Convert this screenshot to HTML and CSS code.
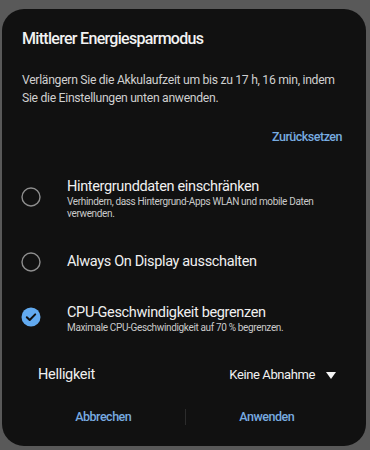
FILE: index.html
```html
<!DOCTYPE html>
<html lang="de">
<head>
<meta charset="utf-8">
<link rel="stylesheet" href="styles.css">
</head>
<body>
<div class="dialog">
  <h1 class="title">Mittlerer Energiesparmodus</h1>
  <p class="desc">Verlängern Sie die Akkulaufzeit um bis zu 17 h, 16 min, indem Sie die Einstellungen unten anwenden.</p>
  <div class="reset-row"><span class="link">Zurücksetzen</span></div>
  <div class="list">
    <div class="row has-sub">
      <svg class="icon" width="20" height="20" viewBox="0 0 20 20"><circle cx="10" cy="10" r="9" fill="none" stroke="#8e8e8e" stroke-width="1.4"/></svg>
      <div class="text">
        <div class="label">Hintergrunddaten einschränken</div>
        <div class="sub">Verhindern, dass Hintergrund-Apps WLAN und mobile Daten verwenden.</div>
      </div>
    </div>
    <div class="row">
      <svg class="icon" width="20" height="20" viewBox="0 0 20 20"><circle cx="10" cy="10" r="9" fill="none" stroke="#8e8e8e" stroke-width="1.4"/></svg>
      <div class="text">
        <div class="label">Always On Display ausschalten</div>
      </div>
    </div>
    <div class="row has-sub">
      <svg class="icon" width="20" height="20" viewBox="0 0 20 20"><circle cx="10" cy="10" r="9.5" fill="#62aaf0"/><path d="M5.8 10.2 L8.7 13 L14.2 7.4" fill="none" stroke="#101010" stroke-width="2" stroke-linecap="round" stroke-linejoin="round"/></svg>
      <div class="text">
        <div class="label">CPU-Geschwindigkeit begrenzen</div>
        <div class="sub">Maximale CPU-Geschwindigkeit auf 70 % begrenzen.</div>
      </div>
    </div>
  </div>
  <div class="bright">
    <span class="bright-label">Helligkeit</span>
    <span class="select">Keine Abnahme<span class="caret"></span></span>
  </div>
  <div class="footer">
    <span class="btn">Abbrechen</span>
    <span class="divider"></span>
    <span class="btn">Anwenden</span>
  </div>
</div>
</body>
</html>
```

FILE: styles.css
```css
html, body {
  margin: 0;
  padding: 0;
}
body {
  background: #595959;
  width: 370px;
  height: 450px;
  overflow: hidden;
  font-family: Roboto, "Noto Sans", sans-serif;
  padding-top: 9px;
  box-sizing: border-box;
}
.dialog {
  margin-left: 2px;
  width: 364px;
  height: 437px;
  background: #111111;
  border-radius: 22px;
  padding-top: 20px;
  box-sizing: border-box;
}
.title {
  margin: 0;
  padding-left: 20px;
  font-size: 16px;
  line-height: 20px;
  font-weight: 500;
  letter-spacing: -0.7px;
  color: #f2f2f2;
}
.desc {
  margin: 22px 0 0;
  padding: 0 22px 0 20px;
  font-size: 12.2px;
  line-height: 18px;
  letter-spacing: -0.3px;
  color: #cfcfcf;
}
.reset-row {
  margin-top: 21px;
  display: flex;
  justify-content: flex-end;
  padding-right: 24px;
}
.link {
  font-size: 12.5px;
  line-height: 18px;
  font-weight: 500;
  letter-spacing: -0.5px;
  color: #78abe0;
}
.list {
  display: flex;
  flex-direction: column;
  padding-top: 16px;
}
.row {
  display: flex;
  align-items: center;
  padding: 16px 20px 16px 19px;
}
.icon {
  flex: none;
  margin-right: 26px;
}
.has-sub .icon {
  margin-bottom: 4px;
}
.text {
  display: flex;
  flex-direction: column;
}
.label {
  font-size: 14.5px;
  line-height: 18px;
  letter-spacing: -0.35px;
  color: #f0f0f0;
}
.sub {
  font-size: 10px;
  line-height: 12px;
  letter-spacing: -0.35px;
  color: #cacaca;
}
.bright {
  margin-top: 16px;
  display: flex;
  justify-content: space-between;
  align-items: center;
  padding: 0 30px 0 36px;
  line-height: 18px;
  color: #f0f0f0;
}
.bright-label {
  font-size: 14.5px;
  letter-spacing: -0.3px;
}
.select {
  display: flex;
  align-items: center;
  font-size: 13px;
  letter-spacing: -0.4px;
}
.caret {
  width: 0;
  height: 0;
  margin-left: 11px;
  border-left: 5px solid transparent;
  border-right: 5px solid transparent;
  border-top: 7px solid #f5f5f5;
}
.footer {
  margin-top: 24px;
  display: flex;
  align-items: center;
  padding: 0 18px 0 20px;
}
.btn {
  flex: 1;
  text-align: center;
  font-size: 12.5px;
  line-height: 18px;
  font-weight: 500;
  letter-spacing: -0.5px;
  color: #78abe0;
}
.divider {
  width: 1px;
  height: 16px;
  background: #2c2c2c;
}
```
